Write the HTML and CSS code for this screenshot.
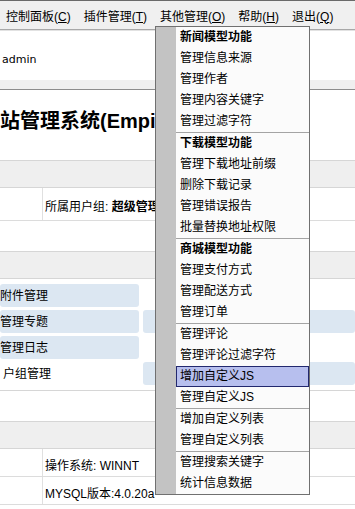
FILE: index.html
```html
<!DOCTYPE html>
<html lang="zh-CN">
<head>
    <meta charset="UTF-8">
    <meta name="viewport" content="width=device-width, initial-scale=1.0">
    <title>帝国网站管理系统</title>
    <link rel="stylesheet" href="styles.css">
</head>
<body>

    <!-- Menu bar -->
    <div class="menubar">
        <span class="menu-item">控制面板(<u>C</u>)</span>
        <span class="menu-item">插件管理(<u>T</u>)</span>
        <span class="menu-item">其他管理(<u>O</u>)</span>
        <span class="menu-item">帮助(<u>H</u>)</span>
        <span class="menu-item">退出(<u>Q</u>)</span>
    </div>

    <div class="userbar">admin</div>
    <div class="band band-top"></div>

    <div class="title-area">
        <h1>站管理系统(Empir</h1>
    </div>

    <div class="band"></div>
    <div class="info-row tall">
        <div class="info-left"></div>
        <div class="info-right">所属用户组: <b>超级管理员</b></div>
    </div>
    <div class="spacer"></div>

    <div class="band"></div>
    <div class="quick-grid">
        <div class="cell hot">附件管理</div>
        <div class="cell"></div>
        <div class="cell hot">管理专题</div>
        <div class="cell hot"></div>
        <div class="cell hot">管理日志</div>
        <div class="cell"></div>
        <div class="cell indent">户组管理</div>
        <div class="cell hot"></div>
    </div>
    <div class="spacer"></div>

    <div class="band"></div>
    <div class="info-row">
        <div class="info-left"></div>
        <div class="info-right">操作系统: WINNT</div>
    </div>
    <div class="info-row">
        <div class="info-left"></div>
        <div class="info-right">MYSQL版本:4.0.20a</div>
    </div>

    <!-- Dropdown of 其他管理 -->
    <div class="dropdown">
        <div class="dd-item head">新闻模型功能</div>
        <div class="dd-item">管理信息来源</div>
        <div class="dd-item">管理作者</div>
        <div class="dd-item">管理内容关键字</div>
        <div class="dd-item">管理过滤字符</div>
        <div class="dd-sep"></div>
        <div class="dd-item head">下载模型功能</div>
        <div class="dd-item">管理下载地址前缀</div>
        <div class="dd-item">删除下载记录</div>
        <div class="dd-item">管理错误报告</div>
        <div class="dd-item">批量替换地址权限</div>
        <div class="dd-sep"></div>
        <div class="dd-item head">商城模型功能</div>
        <div class="dd-item">管理支付方式</div>
        <div class="dd-item">管理配送方式</div>
        <div class="dd-item">管理订单</div>
        <div class="dd-sep"></div>
        <div class="dd-item">管理评论</div>
        <div class="dd-item">管理评论过滤字符</div>
        <div class="dd-item active">增加自定义JS</div>
        <div class="dd-item">管理自定义JS</div>
        <div class="dd-sep"></div>
        <div class="dd-item">增加自定义列表</div>
        <div class="dd-item">管理自定义列表</div>
        <div class="dd-sep"></div>
        <div class="dd-item">管理搜索关键字</div>
        <div class="dd-item">统计信息数据</div>
    </div>

</body>
</html>
```

FILE: styles.css
```css
/* Dasar halaman */
body {
    margin: 0;
    font-family: 'Liberation Sans', 'Noto Sans CJK SC', sans-serif;
    font-size: 12px;
    color: #000;
    background: #fff;
    overflow: hidden;
}

/* Menu bar atas */
.menubar {
    display: flex;
    align-items: center;
    height: 28px;
    padding-left: 6px;
    background: #f0f0f0;
    border-top: 1px solid #6a6a6a;
    border-bottom: 1px solid #a8a8a8;
    box-shadow: 0 1px 0 #e2e2e2;
}

.menu-item {
    margin-right: 13px;
    white-space: nowrap;
}

.menu-item u {
    text-decoration: underline;
}

.userbar {
    height: 27px;
    padding-top: 22px;
    padding-left: 2px;
    line-height: 14px;
    font-family: 'DejaVu Sans', sans-serif;
    font-size: 11px;
    margin-top: 1px;
}

/* Garis abu-abu */
.band {
    height: 26px;
    background: #efefef;
    border-top: 1px solid #d6d6d6;
    border-bottom: 1px solid #d6d6d6;
}

.band-top {
    height: 9px;
    border-top: none;
    border-bottom-color: #8c8c8c;
}

.title-area {
    height: 70px;
}

.title-area h1 {
    margin: 0;
    padding-top: 18px;
    font-size: 20px;
    line-height: 26px;
    font-weight: bold;
    white-space: nowrap;
}

.info-row {
    display: flex;
    height: 27px;
    border-bottom: 1px solid #dcdcdc;
}

.info-row.tall {
    height: 32px;
}

.info-left {
    width: 42px;
    border-right: 1px solid #e0e0e0;
}

.info-right {
    padding-left: 2px;
    padding-top: 4px;
    line-height: 27px;
    white-space: nowrap;
}

.tall .info-right {
    line-height: 32px;
    padding-top: 3px;
}

.spacer {
    height: 30px;
}

/* Grid menu cepat */
.quick-grid {
    display: grid;
    grid-template-columns: 139px 1fr;
    column-gap: 4px;
    row-gap: 3px;
    padding: 5px 0 5px;
    border-bottom: 1px solid #d6d6d6;
}

.cell {
    height: 23px;
    line-height: 23px;
    padding-top: 1px;
    box-sizing: border-box;
    border-radius: 3px;
    white-space: nowrap;
}

.cell.hot {
    background: #dce7f2;
}

.cell.indent {
    padding-left: 3px;
}

/* Dropdown menu */
.dropdown {
    position: absolute;
    left: 155px;
    top: 26px;
    width: 133px;
    padding-left: 20px;
    background: linear-gradient(to right, #c3c3c3 20px, #fbfbfb 20px);
    border: 1px solid #707070;
}

.dd-item {
    height: 21px;
    line-height: 21px;
    padding-left: 4px;
    white-space: nowrap;
}

.dd-item.head {
    font-weight: bold;
}

.dd-item.active {
    height: 19px;
    line-height: 19px;
    padding-left: 3px;
    background: #b7bfee;
    border: 1px solid #22286e;
}

.dd-sep {
    height: 1px;
    background: #a4a4a4;
}
```
